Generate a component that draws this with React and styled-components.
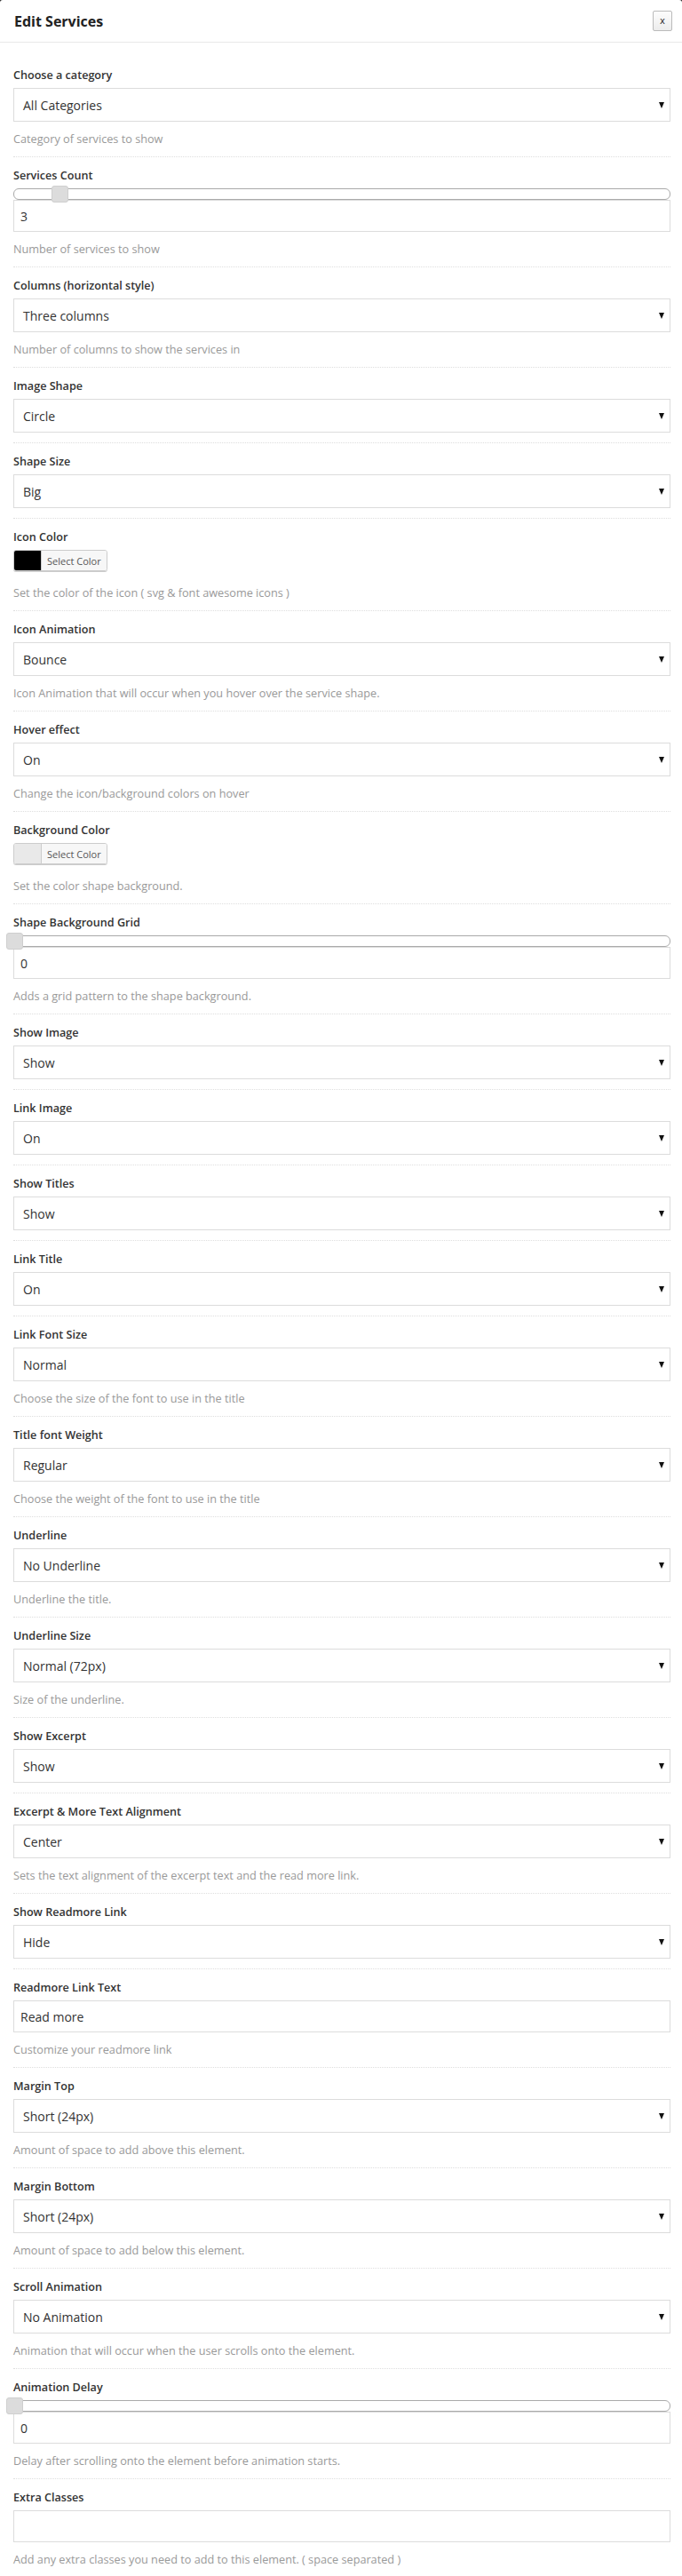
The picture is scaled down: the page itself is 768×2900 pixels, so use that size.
import React from 'react';
import styled, { createGlobalStyle } from 'styled-components';

const GlobalStyle = createGlobalStyle`
  html, body {
    margin: 0;
    padding: 0;
    background: #222;
  }
  body {
    font-family: "Open Sans", "Liberation Sans", Arial, sans-serif;
    color: #333;
  }
`;

const fields = [
  { label: 'Choose a category', type: 'select', value: 'All Categories', help: 'Category of services to show' },
  { label: 'Services Count', type: 'slider', value: '3', pos: 6.9, help: 'Number of services to show' },
  { label: 'Columns (horizontal style)', type: 'select', value: 'Three columns', help: 'Number of columns to show the services in' },
  { label: 'Image Shape', type: 'select', value: 'Circle' },
  { label: 'Shape Size', type: 'select', value: 'Big' },
  { label: 'Icon Color', type: 'color', swatch: '#000000', help: 'Set the color of the icon ( svg & font awesome icons )' },
  { label: 'Icon Animation', type: 'select', value: 'Bounce', help: 'Icon Animation that will occur when you hover over the service shape.' },
  { label: 'Hover effect', type: 'select', value: 'On', help: 'Change the icon/background colors on hover' },
  { label: 'Background Color', type: 'color', swatch: '#e9e9e9', help: 'Set the color shape background.' },
  { label: 'Shape Background Grid', type: 'slider', value: '0', pos: 0, help: 'Adds a grid pattern to the shape background.' },
  { label: 'Show Image', type: 'select', value: 'Show' },
  { label: 'Link Image', type: 'select', value: 'On' },
  { label: 'Show Titles', type: 'select', value: 'Show' },
  { label: 'Link Title', type: 'select', value: 'On' },
  { label: 'Link Font Size', type: 'select', value: 'Normal', help: 'Choose the size of the font to use in the title' },
  { label: 'Title font Weight', type: 'select', value: 'Regular', help: 'Choose the weight of the font to use in the title' },
  { label: 'Underline', type: 'select', value: 'No Underline', help: 'Underline the title.' },
  { label: 'Underline Size', type: 'select', value: 'Normal (72px)', help: 'Size of the underline.' },
  { label: 'Show Excerpt', type: 'select', value: 'Show' },
  { label: 'Excerpt & More Text Alignment', type: 'select', value: 'Center', help: 'Sets the text alignment of the excerpt text and the read more link.' },
  { label: 'Show Readmore Link', type: 'select', value: 'Hide' },
  { label: 'Readmore Link Text', type: 'text', value: 'Read more', help: 'Customize your readmore link' },
  { label: 'Margin Top', type: 'select', value: 'Short (24px)', help: 'Amount of space to add above this element.' },
  { label: 'Margin Bottom', type: 'select', value: 'Short (24px)', help: 'Amount of space to add below this element.' },
  { label: 'Scroll Animation', type: 'select', value: 'No Animation', help: 'Animation that will occur when the user scrolls onto the element.' },
  { label: 'Animation Delay', type: 'slider', value: '0', pos: 0, help: 'Delay after scrolling onto the element before animation starts.' },
  { label: 'Extra Classes', type: 'text', value: '', help: 'Add any extra classes you need to add to this element. ( space separated )' },
];

const Modal = styled.div`
  background: #fff;
  border-radius: 3px 3px 0 0;
  min-height: 2900px;
`;

const Header = styled.div`
  height: 48px;
  box-sizing: border-box;
  display: flex;
  align-items: center;
  justify-content: space-between;
  padding: 0 11px 0 16px;
  border-bottom: 1px solid #e8e8e8;
`;

const Title = styled.h1`
  margin: 0;
  font-size: 16px;
  font-weight: 700;
  color: #222;
`;

const CloseButton = styled.button`
  width: 22px;
  height: 23px;
  padding: 0;
  border: 1px solid #bbb;
  border-radius: 2px;
  background: linear-gradient(#fdfdfd, #ececec);
  font-family: "DejaVu Sans", sans-serif;
  font-size: 10px;
  line-height: 1;
  color: #333;
  display: flex;
  align-items: center;
  justify-content: center;
`;

const Body = styled.div`
  padding: 16px 13px 0 15px;
`;

const Field = styled.div`
  padding: 12px 0 11px;
  border-bottom: 1px dotted #dedede;
`;

const Label = styled.div`
  font-size: 12.6px;
  line-height: 18px;
  font-weight: 600;
  color: #333;
  margin-bottom: 5px;
`;

const SelectBox = styled.div`
  height: 38px;
  box-sizing: border-box;
  border: 1px solid #dcdcdc;
  background: #fff;
  display: flex;
  align-items: center;
  justify-content: space-between;
  padding: 0 6px 0 10px;
  font-size: 14px;
  color: #333;
`;

const Arrow = styled.svg`
  width: 6px;
  height: 7px;
  display: block;
`;

const TextInput = styled.div`
  height: 36px;
  box-sizing: border-box;
  border: 1px solid #dcdcdc;
  background: #fff;
  display: flex;
  align-items: center;
  padding: 0 7px;
  font-size: 14px;
  color: #333;
`;

const Track = styled.div`
  position: relative;
  height: 13px;
  box-sizing: border-box;
  border: 1px solid #aaa;
  border-radius: 6px;
  background: #fff;
`;

const Thumb = styled.span`
  position: absolute;
  top: -4px;
  width: 19px;
  height: 19px;
  box-sizing: border-box;
  margin-left: -9px;
  border: 1px solid #cfcfcf;
  border-radius: 3px;
  background: #dcdcdc;
`;

const PickerWrap = styled.div`
  height: 29px;
`;

const PickerButton = styled.div`
  display: inline-flex;
  height: 24px;
  box-sizing: border-box;
  border: 1px solid #ccc;
  border-radius: 3px;
  box-shadow: 0 1px 0 #ccc;
  overflow: hidden;
`;

const Swatch = styled.span`
  width: 30px;
  background: ${p => p.color};
`;

const PickerText = styled.span`
  display: flex;
  align-items: center;
  padding: 0 6px;
  border-left: 1px solid #ccc;
  background: #f7f7f7;
  font-size: 11px;
  color: #555;
`;

const Help = styled.div`
  margin-top: 10px;
  font-size: 12.7px;
  line-height: 18px;
  color: #999;
`;

const Select = ({ value }) => (
  <SelectBox>
    <span>{value}</span>
    <Arrow viewBox="0 0 6 7">
      <polygon points="0,0 6,0 3,7" fill="#111" />
    </Arrow>
  </SelectBox>
);

const Control = ({ field }) => {
  switch (field.type) {
    case 'select':
      return <Select value={field.value} />;
    case 'slider':
      return (
        <>
          <Track>
            <Thumb style={{ left: `${field.pos}%` }} />
          </Track>
          <TextInput>{field.value}</TextInput>
        </>
      );
    case 'color':
      return (
        <PickerWrap>
          <PickerButton>
            <Swatch color={field.swatch} />
            <PickerText>Select Color</PickerText>
          </PickerButton>
        </PickerWrap>
      );
    default:
      return <TextInput>{field.value}</TextInput>;
  }
};

export default function App() {
  return (
    <>
      <GlobalStyle />
      <Modal>
        <Header>
          <Title>Edit Services</Title>
          <CloseButton>x</CloseButton>
        </Header>
        <Body>
          {fields.map(f => (
            <Field key={f.label}>
              <Label>{f.label}</Label>
              <Control field={f} />
              {f.help && <Help>{f.help}</Help>}
            </Field>
          ))}
        </Body>
      </Modal>
    </>
  );
}
